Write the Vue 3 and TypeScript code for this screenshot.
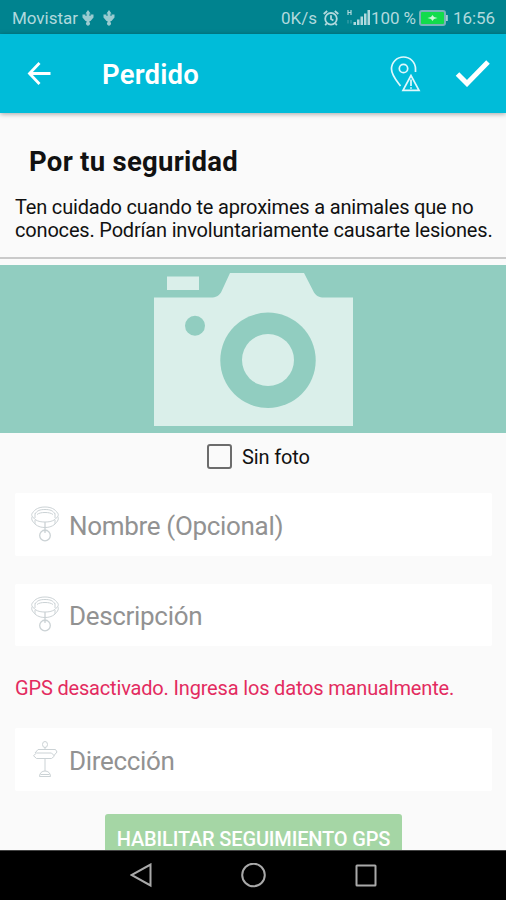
<script setup lang="ts">
import { ref } from 'vue'

interface Field { label: string; key: string }

const petFields: Field[] = [
  { key: 'name', label: 'Nombre (Opcional)' },
  { key: 'description', label: 'Descripción' },
]
const withoutPhoto = ref(false)
</script>

<template>
  <div class="screen">
    <header class="status">
      <span class="carrier">Movistar</span>
      <svg v-for="n in 2" :key="n" class="usb" width="12" height="16" viewBox="0 0 12 16">
        <path d="M6 0 8.500 3.500H7.500V6h1V4.500h3v3L8.500 11H7.500v1.200a2 2 0 1 1-3 0V11h-1l-3-3.500v-3h3V6h1V3.500h-1Z" />
      </svg>
      <span class="spacer"></span>
      <span class="speed">0K/s</span>
      <svg class="alarm" width="16" height="16" viewBox="0 0 16 16">
        <circle cx="8" cy="8.800" r="5.800" /><path d="M.7 4 4.200 1M15.300 4 11.800 1M8 5.300V9l2.400 1.600M3.700 13.300l-1.500 1.900M12.300 13.300l1.500 1.900" />
      </svg>
      <svg class="signal" width="25" height="17" viewBox="0 0 25 17">
        <path d="M2 1v5M5 1v5M2 3.500h3" class="net" /><path d="M2 11v3.500M5 11v3.500" class="net faint" />
        <path d="M7.500 13H10v3H7.500zM11 10.500h2.500V16H11zM14.500 7.500H17V16h-2.500zM18 4.500h2.500V16H18zM21.500 1H24v15h-2.500z" />
      </svg>
      <span class="percent">100 %</span>
      <svg class="battery" width="29" height="16" viewBox="0 0 29 16">
        <rect x="1" y="1" width="25" height="14" rx="2" /><path class="cap" d="M27 5h1.800v6H27z" />
        <path class="bolt" d="m8.500 8 3.500-1 1.500-2 1.500 2 3.500 1-3.500 1-1.500 2-1.500-2Z" />
      </svg>
      <span class="time">16:56</span>
    </header>

    <div class="appbar">
      <svg class="back" width="24" height="24" viewBox="0 0 24 24"><path d="M23.500 12.500H2.500M12.500 2 2.500 12.500 12.500 23" /></svg>
      <h1>Perdido</h1>
      <svg class="pin" width="32" height="38" viewBox="0 0 32 38">
        <path d="M11.500 32C7 26 2.500 21 2.500 15a12 12 0 0 1 24 0v3" />
        <circle cx="14.500" cy="14.500" r="4.200" />
        <path d="M22 21.500 14 36.300H30ZM22 25.500v6.500M22 33.200v1.500" />
      </svg>
      <svg class="done" width="36" height="28" viewBox="0 0 36 28"><path d="m2.500 15 9.500 9.500L33 3" /></svg>
    </div>

    <main>
      <section class="notice">
        <h2>Por tu seguridad</h2>
        <p><span class="line">Ten cuidado cuando te aproximes a animales que no</span> <span class="line">conoces. Podrían involuntariamente causarte lesiones.</span></p>
      </section>

      <div class="photo">
        <svg width="200" height="156" viewBox="0 0 200 156">
          <path d="M13 5.500h32V19H13zM0 26.500h57c5 0 8-2 10-5L76 2h74L160 21.500c2 3 5 5 10 5h29V155H0Z" />
          <circle class="cut" cx="41" cy="54.800" r="10" /><circle class="cut" cx="114" cy="89.300" r="47.700" />
          <circle cx="114" cy="89" r="26" />
        </svg>
      </div>

      <label class="check">
        <input v-model="withoutPhoto" type="checkbox" /><span>Sin foto</span>
      </label>

      <div v-for="field in petFields" :key="field.key" class="field" :class="field.key">
        <svg class="field-icon" width="30" height="38" viewBox="0 0 30 38">
          <path d="M2.500 8C5 4 9 2 15 2s10 2 12.500 6c1 1 1 2 .3 3.500.7 1.500.7 3-.3 4.500-2.500 4-6.500 6.500-12.500 6.500S5 20 2.500 16c-1-1.500-1-3-.3-4.500C1.500 10 1.500 9 2.500 8Z" />
          <path d="M5 9c2-3.500 5-4.500 10-4.500S23 5.500 25 9M2.500 11.500C5 15.500 9 17 15 17s10-1.500 12.500-5.500M5 8.500v4.500M25 8.500v4.500M7 9.500c2-1.500 4.500-2 8-2s6 .5 8 2M5 15v4M25 15v4" />
          <path class="ring" d="M15 17v11M12.500 25.500h5" /><circle class="ring" cx="15" cy="30.500" r="5.300" />
        </svg>
        <span class="label">{{ field.label }}</span>
      </div>

      <p class="warning">GPS desactivado. Ingresa los datos manualmente.</p>

      <div class="field address">
        <svg class="field-icon" width="30" height="38" viewBox="0 0 30 38">
          <ellipse cx="15" cy="4.500" rx="2.500" ry="3" />
          <path d="M15 7.500v2M8 9.500h17.500l1.500 2.500-3 3.500M8 9.500 5 13M6.500 13h15l3 3-3 2.500h-15L3.500 15.700ZM15 19v12M9.500 36.500c0-3.500 2.500-5.500 5.500-5.500s5.500 2 5.500 5.500ZM10.500 34.500h9" />
        </svg>
        <span class="label">Dirección</span>
      </div>

      <button class="gps" type="button">HABILITAR SEGUIMIENTO GPS</button>
    </main>

    <nav class="navigation">
      <svg width="24" height="26" viewBox="0 0 24 26"><path d="M20.500 1.500v21L1.500 12Z" /></svg>
      <svg width="26" height="26" viewBox="0 0 26 26"><circle cx="12.500" cy="12" r="11.300" /></svg>
      <svg width="22" height="24" viewBox="0 0 22 24"><rect x="1.500" y="1.500" width="19" height="20" rx=".5" /></svg>
    </nav>
  </div>
</template>

<style>
body { margin: 0; }
</style>

<style scoped>
* { box-sizing: border-box; }
h1, h2, p { margin: 0; }
svg { display: block; flex: none; }
.screen { width: 506px; height: 900px; display: flex; flex-direction: column; overflow: hidden; background: #fafafa; font-family: Roboto, sans-serif; color: #111; white-space: nowrap; }
.status { height: 34px; flex: none; display: flex; align-items: center; padding: 1px 11px 0 12px; background: #00838f; color: #b1d9dd; font-size: 17px; }
.carrier { width: 70px; letter-spacing: -.02px; }
.usb { fill: #9acbd0; margin-right: 9px; }
.spacer { flex: 1; }
.speed { width: 43px; }
.alarm { fill: none; stroke: #b1d9dd; stroke-width: 1.8; margin: 0 7px 0 -1px; }
.signal { fill: #b1d9dd; }
.net { fill: none; stroke: #b1d9dd; stroke-width: 1.2; }
.faint { opacity: .35; }
.percent { width: 48px; letter-spacing: -.1px; }
.battery rect { fill: #12dc4b; stroke: #79b3ba; stroke-width: 2; }
.cap { fill: #a5d1d5; }
.bolt { fill: #c9f8d5; }
.time { width: 42px; margin-left: 5px; letter-spacing: -.1px; }
.appbar { height: 79px; flex: none; display: flex; align-items: center; padding: 0 15px 1px 27px; background: #00bcd9; box-shadow: 0 1px 5px rgba(0,0,0,.35); color: #fff; z-index: 1; }
.back, .done { fill: none; stroke: #fff; stroke-width: 2.8; }
.done { stroke-width: 5; }
h1 { flex: 1; margin-left: 51px; font-size: 27.5px; font-weight: 600; letter-spacing: .2px; padding-top: 2px; }
.pin { fill: none; stroke: #e0f8fc; stroke-width: 1.7; margin-right: 34px; }
main { flex: 1; min-height: 0; overflow: hidden; display: flex; flex-direction: column; align-items: stretch; }
.notice { height: 146px; flex: none; padding: 31px 15px 0; border-bottom: 2px solid #cacaca; }
h2 { margin-left: 14px; font-size: 27.5px; line-height: 36px; font-weight: 700; letter-spacing: .28px; }
.notice p { margin-top: 16px; font-size: 20px; line-height: 23px; letter-spacing: -.18px; }
.line { display: block; }
.photo { height: 168px; flex: none; margin-top: 6px; padding: 6px 0 0 2px; display: flex; justify-content: center; background: #91cdc0; fill: #daefea; }
.cut { fill: #91cdc0; }
.check { height: 26px; flex: none; display: flex; align-items: center; margin: 10px 0 0 207px; font-size: 20px; letter-spacing: -.15px; }
.check span { padding-top: 2px; }
.check input { appearance: none; width: 25px; height: 25px; margin: 0 10px 0 0; border: 2px solid #6c6c6c; border-radius: 3px; }
.field { height: 63px; flex: none; margin: 24px 14px 0 15px; padding-left: 15px; display: flex; align-items: center; background: #fff; border-radius: 2px; }
.field.description { margin-top: 28px; height: 62px; }
.field-icon { fill: none; stroke: #cbd2d5; stroke-width: 1; margin-top: -2px; }
.ring { stroke-width: 1.3; }
.label { margin-left: 9px; color: #929292; font-size: 26px; letter-spacing: -.32px; padding-top: 2px; }
.warning { height: 24px; flex: none; margin: 30px 0 0 15px; line-height: 24px; color: #e32b60; font-size: 20px; letter-spacing: -.17px; }
.field.address { margin-top: 28px; }
.gps { width: 297px; height: 51px; flex: none; margin: 23px 0 0 105px; padding: 0; border: 0; border-radius: 3px; background: #a5d6a5; color: #fff; font: 500 20px/51px Roboto, sans-serif; letter-spacing: -.16px; }
.navigation { height: 50px; flex: none; display: flex; align-items: center; padding-left: 130px; gap: 87px; background: #000; border-top: 1px solid #444; fill: none; stroke: #a9a9a9; stroke-width: 2; }
.navigation svg:last-child { margin-left: 1px; }
</style>
